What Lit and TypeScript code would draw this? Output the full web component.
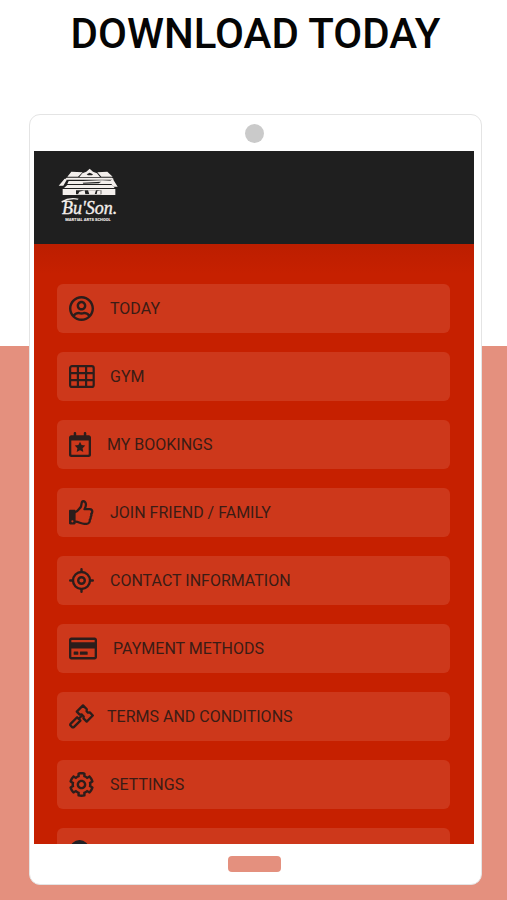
import { LitElement, html, css, svg } from "lit";
import { customElement } from "lit/decorators.js";
import { styleMap } from "lit/directives/style-map.js";

const icons = {
  user: svg`<svg viewBox="0 8 496 496" width="25" height="25"><path fill="currentColor" d="M248 104c-53 0-96 43-96 96s43 96 96 96 96-43 96-96-43-96-96-96zm0 144c-26.500 0-48-21.500-48-48s21.500-48 48-48 48 21.500 48 48-21.500 48-48 48zm0-240C111 8 0 119 0 256s111 248 248 248 248-111 248-248S385 8 248 8zm0 448c-49.700 0-95.100-18.300-130.100-48.400 14.900-23 40.400-38.600 69.600-39.500 20.800 6.400 40.600 9.600 60.500 9.600s39.700-3.100 60.500-9.600c29.200 1 54.700 16.500 69.600 39.500-35 30.100-80.400 48.400-130.100 48.400zm162.700-84.100c-24.400-31.400-62.100-51.900-105.100-51.900-10.200 0-26 9.600-57.600 9.600-31.500 0-47.400-9.600-57.600-9.600-42.900 0-80.600 20.500-105.100 51.900C61.900 339.200 48 299.200 48 256c0-110.300 89.700-200 200-200s200 89.700 200 200c0 43.200-13.900 83.200-37.300 115.900z"/></svg>`,
  grid: svg`<svg viewBox="0 0 26 25" width="26" height="25"><g fill="none" stroke="currentColor" stroke-width="2.200"><rect x="1.100" y="2.100" width="23.600" height="20.800" rx="2"/><path d="M8.900 2v21M17.100 2v21M1 9.200h24M1 16.100h24"/></g></svg>`,
  calendar: svg`<svg viewBox="0 0 22 25" width="22" height="25"><path fill="currentColor" d="M4.700 3.300V1.200C4.700.5 5.200 0 5.900 0S7.200.5 7.200 1.200v2.100h7.600V1.200c0-.7.500-1.200 1.200-1.200s1.300.5 1.300 1.200v2.100h2.400C21 3.300 22 4.300 22 5.600v17.100c0 1.300-1 2.300-2.300 2.300H2.300C1 25 0 24 0 22.700V5.600c0-1.300 1-2.300 2.300-2.300zM2.300 8.400v13.800c0 .3.200.5.500.5h16.400c.3 0 .5-.2.500-.5V8.400z"/><path fill="currentColor" d="m11 9.800 1.600 3.300 3.700.5-2.700 2.600.7 3.700-3.300-1.700-3.300 1.700.7-3.700-2.700-2.600 3.700-.5z"/></svg>`,
  thumb: svg`<svg viewBox="0 0 25 25" width="25" height="25"><path fill="currentColor" fill-rule="evenodd" d="M1.200 9.800h4.200c.7 0 1.200.5 1.200 1.200v12.300c0 .7-.5 1.200-1.200 1.200H1.200c-.7 0-1.200-.5-1.200-1.200V11c0-.7.5-1.200 1.200-1.200zm2.200 10.400a1.100 1.100 0 1 0 0 2.200 1.100 1.100 0 0 0 0-2.200z"/><path fill="none" stroke="currentColor" stroke-width="2.300" stroke-linejoin="round" stroke-linecap="round" d="M6.500 12c2.300-.7 3.600-3.200 5-4.600C12.700 6 12.200 3.600 13 2c.5-1 2.100-1 3 0 1.500 1.700.9 4.600-.5 7.200h5.200c1.900 0 2.800 1.400 2.500 2.800-.1.900-.6 1.600-1 2 .4.800.2 2-.5 2.900.2 1.300-.1 2.100-.9 2.900.1 1.900-.7 4-3 4h-2.500c-3.200 0-5.600-2-8.800-2.100"/></svg>`,
  locate: svg`<svg viewBox="0 0 25 25" width="25" height="25"><g fill="none" stroke="currentColor" stroke-width="2.400"><circle cx="12.500" cy="12.500" r="8.500"/><circle cx="12.500" cy="12.500" r="3.300"/><path stroke-linecap="round" d="M12.500 1.200v2.300M12.500 21.500v2.300M1.200 12.500h2.300M21.500 12.500h2.300"/></g></svg>`,
  card: svg`<svg viewBox="0 0 576 512" width="28" height="25"><path fill="currentColor" d="M527.900 32H48.100C21.500 32 0 53.500 0 80v352c0 26.500 21.500 48 48.100 48h479.800c26.600 0 48.100-21.500 48.100-48V80c0-26.500-21.500-48-48.100-48zM54.100 80h467.800c3.300 0 6 2.700 6 6v42H48.100V86c0-3.300 2.700-6 6-6zm467.800 352H54.100c-3.300 0-6-2.700-6-6V256h479.800v170c0 3.300-2.700 6-6 6zM192 332v40c0 6.600-5.400 12-12 12h-72c-6.600 0-12-5.400-12-12v-40c0-6.600 5.400-12 12-12h72c6.600 0 12 5.400 12 12zm192 0v40c0 6.600-5.400 12-12 12H236c-6.600 0-12-5.400-12-12v-40c0-6.600 5.400-12 12-12h136c6.600 0 12 5.400 12 12z"/></svg>`,
  gavel: svg`<svg viewBox="0 0 25 25" width="25" height="25"><g fill="none" stroke="currentColor" stroke-width="2.300" stroke-linejoin="round" stroke-linecap="round"><path d="m14 1.400 3.800 3.900-.2 2 1.300 1.300 1.900-.2 3 3.100-6.100 6.100-3.200-3.200.2-1.900-2.100-2.100-1.900.2-2.900-3z"/><path d="m12.600 12-2.800 2.700"/><path d="m8.100 13.300 3.300 3.300-6.300 6.300c-.7.700-1.500.7-2.200 0l-1.100-1.100c-.7-.7-.7-1.500 0-2.200z"/></g></svg>`,
  gear: svg`<svg viewBox="8 8 496 496" width="25" height="25"><path fill="currentColor" d="M452.515 237l31.843-18.382c9.426-5.441 13.996-16.542 11.177-27.054-11.404-42.531-33.842-80.547-64.058-110.797-7.680-7.688-19.575-9.246-28.985-3.811l-31.785 18.358a196.276 196.276 0 0 0-32.899-19.020V39.541a24.016 24.016 0 0 0-17.842-23.206c-41.761-11.107-86.117-11.121-127.930-.001-10.519 2.798-17.844 12.321-17.844 23.206v36.753a196.276 196.276 0 0 0-32.899 19.020l-31.785-18.358c-9.410-5.435-21.305-3.877-28.985 3.811-30.216 30.250-52.654 68.265-64.058 110.797-2.819 10.512 1.751 21.613 11.177 27.054L59.485 237a197.715 197.715 0 0 0 0 37.999l-31.843 18.382c-9.426 5.441-13.996 16.542-11.177 27.054 11.404 42.531 33.842 80.547 64.058 110.797 7.680 7.688 19.575 9.246 28.985 3.811l31.785-18.358a196.202 196.202 0 0 0 32.899 19.019v36.753a24.016 24.016 0 0 0 17.842 23.206c41.761 11.107 86.117 11.122 127.930.001 10.519-2.798 17.844-12.321 17.844-23.206v-36.753a196.340 196.340 0 0 0 32.899-19.019l31.785 18.358c9.410 5.435 21.305 3.877 28.985-3.811 30.216-30.250 52.654-68.266 64.058-110.797 2.819-10.512-1.751-21.613-11.177-27.054L452.515 275c1.220-12.645 1.220-25.351 0-38zm-52.679 63.019l43.819 25.289a200.138 200.138 0 0 1-33.849 58.528l-43.829-25.309c-31.984 27.397-36.659 30.077-76.168 44.029v50.599a200.917 200.917 0 0 1-67.618 0v-50.599c-39.504-13.950-44.196-16.642-76.168-44.029l-43.829 25.309a200.150 200.150 0 0 1-33.849-58.528l43.819-25.289c-7.630-41.299-7.634-46.719 0-88.038l-43.819-25.289c7.850-21.229 19.310-41.049 33.849-58.529l43.829 25.309c31.984-27.397 36.660-30.078 76.168-44.030V58.845a200.917 200.917 0 0 1 67.618 0v50.599c39.504 13.950 44.196 16.642 76.168 44.030l43.829-25.309a200.143 200.143 0 0 1 33.849 58.529l-43.819 25.289c7.631 41.300 7.634 46.718 0 88.037zM256 160c-52.935 0-96 43.065-96 96s43.065 96 96 96 96-43.065 96-96-43.065-96-96-96zm0 144c-26.468 0-48-21.532-48-48 0-26.467 21.532-48 48-48s48 21.533 48 48c0 26.468-21.532 48-48 48z"/></svg>`,
  dot: svg`<svg viewBox="0 0 21 25" width="21" height="25"><circle cx="10.500" cy="9.500" r="9.500" fill="#222126"/></svg>`,
};

interface Entry {
  icon: keyof typeof icons;
  slot: number;
  label: string;
}

const entries: Entry[] = [
  { icon: "user", slot: 25, label: "TODAY" },
  { icon: "grid", slot: 25, label: "GYM" },
  { icon: "calendar", slot: 22, label: "MY BOOKINGS" },
  { icon: "thumb", slot: 25, label: "JOIN FRIEND / FAMILY" },
  { icon: "locate", slot: 25, label: "CONTACT INFORMATION" },
  { icon: "card", slot: 28, label: "PAYMENT METHODS" },
  { icon: "gavel", slot: 22, label: "TERMS AND CONDITIONS" },
  { icon: "gear", slot: 25, label: "SETTINGS" },
  { icon: "dot", slot: 21, label: "" },
];

@customElement("school-logo")
export class SchoolLogo extends LitElement {
  static styles = css`
    :host { display: block; line-height: 0; }
    svg { overflow: visible; }
    .name { font: italic 400 54px "Liberation Serif", serif; stroke: #f3efec; stroke-width: 1px; }
    .tag { font: 900 12px Roboto, sans-serif; }
  `;
  render() {
    return html`<svg viewBox="24 24 198 168" width="66" height="56" fill="#f3efec">
      <path fill-rule="evenodd" d="M119 26l10 9 12 5 9 11H88l9-11 12-5zM110 43l4 3h12l3-3-10-5z"/>
      <path d="M64 35l34 2-14 13H52zM142 37l30-2 16 15h-34z"/>
      <path d="M50 53h136l6 5-8 1H54l-12 1z"/>
      <path d="M56 63h44l56-2 28 1 4 10H52z"/>
      <path d="M44 56l6 4-10 17H26zM188 56l15 24h-14l-9-16z"/>
      <path d="M52 75h134l8 9H42z"/>
      <path fill-rule="evenodd" d="M38 87h158v18H38zM78 91v12h76V91z"/>
      <path d="M84 103l4-8 16-4 2 12zM114 91h24l-4 12h-16zM142 93l10-2v12h-12z"/>
      <path fill="#1f1f1f" d="M98 68l56-3-8 5-46 1z"/>
      <path d="M34 124q24-15 52-8l-3 3q-24-4-47 9z"/>
      <text class="name" x="36" y="163">Bu'Son.</text>
      <text class="tag" x="46" y="184">MARTIAL ARTS SCHOOL</text>
    </svg>`;
  }
}

@customElement("app-root")
export class AppRoot extends LitElement {
  static styles = css`
    :host {
      display: flex;
      flex-direction: column;
      box-sizing: border-box;
      height: 100vh;
      padding: 0 25px 15px 29px;
      font-family: Roboto, sans-serif;
      background: linear-gradient(#fff 346px, #e4907e 346px);
    }
    .title {
      margin: 0;
      padding-top: 8px;
      height: 106px;
      box-sizing: border-box;
      font-size: 42px;
      line-height: 52px;
      font-weight: 500;
      color: #050505;
      text-align: center;
      white-space: nowrap;
    }
    .phone {
      flex: 1;
      min-height: 0;
      margin-top: 8px;
      display: flex;
      flex-direction: column;
      box-sizing: border-box;
      padding: 0 7px 0 4px;
      background: #fff;
      border: 1px solid #e4e4e4;
      border-radius: 11px;
    }
    .top, .bottom {
      display: flex;
      align-items: center;
      justify-content: center;
    }
    .top { height: 36px; }
    .bottom { height: 40px; }
    .camera {
      width: 19px;
      height: 19px;
      border-radius: 50%;
      background: #cacaca;
    }
    .home {
      width: 53px;
      height: 16px;
      padding: 0;
      border: 0;
      border-radius: 4px;
      background: #e4907e;
    }
    .screen {
      flex: 1;
      min-height: 0;
      overflow: hidden;
      background: #c62000;
    }
    .bar {
      height: 93px;
      box-sizing: border-box;
      padding: 17px 24px;
      background: #1f1f1f;
    }
    .menu {
      display: flex;
      flex-direction: column;
      gap: 19px;
      padding: 40px 24px 40px 23px;
      background: linear-gradient(#bc1e00, #c62000 30px);
    }
    .item {
      display: flex;
      align-items: center;
      gap: 16px;
      height: 49px;
      box-sizing: border-box;
      padding: 0 12px;
      border-radius: 6px;
      background: #cd381b;
      color: #3a1c15;
      font-size: 16px;
      line-height: 21px;
      text-decoration: none;
      white-space: nowrap;
    }
    .slot { display: block; line-height: 0; flex: none; color: #2c1d1b; }
  `;

  render() {
    return html`
      <h1 class="title">DOWNLOAD TODAY</h1>
      <main class="phone">
        <div class="top"><span class="camera"></span></div>
        <div class="screen">
          <header class="bar"><school-logo></school-logo></header>
          <nav class="menu">
            ${entries.map(
              (e) => html`<a class="item" href="#${e.icon}">
                <span class="slot" style=${styleMap({ width: `${e.slot}px` })}>${icons[e.icon]}</span>
                <span>${e.label}</span>
              </a>`
            )}
          </nav>
        </div>
        <div class="bottom"><button class="home" aria-label="Home"></button></div>
      </main>
    `;
  }
}
